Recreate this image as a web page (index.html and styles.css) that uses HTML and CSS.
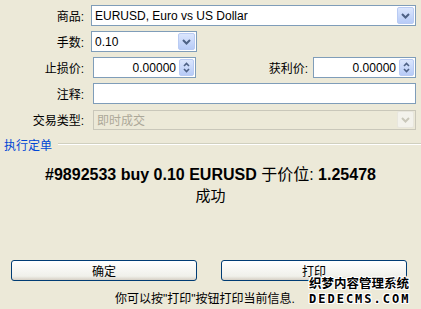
FILE: index.html
```html
<!DOCTYPE html>
<html lang="zh-CN">
<head>
    <meta charset="UTF-8">
    <title>新定单</title>
    <link rel="stylesheet" href="styles.css">
</head>
<body>
    <div class="dialog">
        <div class="form">
            <div class="row">
                <span class="lbl">商品:</span>
                <div class="combo wide">
                    <span class="val">EURUSD, Euro vs US Dollar</span>
                    <span class="drop"><svg width="9" height="6" viewBox="0 0 9 6"><path d="M1 1l3.5 3.5L8 1" fill="none" stroke="#4d6185" stroke-width="2"/></svg></span>
                </div>
            </div>
            <div class="row">
                <span class="lbl">手数:</span>
                <div class="combo small">
                    <span class="val">0.10</span>
                    <span class="drop"><svg width="9" height="6" viewBox="0 0 9 6"><path d="M1 1l3.5 3.5L8 1" fill="none" stroke="#4d6185" stroke-width="2"/></svg></span>
                </div>
            </div>
            <div class="row">
                <span class="lbl">止损价:</span>
                <div class="spin">
                    <span class="val num">0.00000</span>
                    <span class="updown"><svg width="7" height="11" viewBox="0 0 7 11"><path d="M1 4l2.5-2.5L6 4M1 7l2.5 2.5L6 7" fill="none" stroke="#4d6185" stroke-width="1.6"/></svg></span>
                </div>
                <span class="lbl right">获利价:</span>
                <div class="spin">
                    <span class="val num">0.00000</span>
                    <span class="updown"><svg width="7" height="11" viewBox="0 0 7 11"><path d="M1 4l2.5-2.5L6 4M1 7l2.5 2.5L6 7" fill="none" stroke="#4d6185" stroke-width="1.6"/></svg></span>
                </div>
            </div>
            <div class="row">
                <span class="lbl">注释:</span>
                <div class="edit"></div>
            </div>
            <div class="row">
                <span class="lbl">交易类型:</span>
                <div class="combo disabled">
                    <span class="val">即时成交</span>
                    <span class="drop"><svg width="9" height="6" viewBox="0 0 9 6"><path d="M1 1l3.5 3.5L8 1" fill="none" stroke="#c9c7ba" stroke-width="2"/></svg></span>
                </div>
            </div>
        </div>

        <div class="section">
            <span class="title">执行定单</span>
            <span class="rule"></span>
        </div>

        <div class="result">
            <p class="main">#9892533 buy 0.10 EURUSD <span class="cn">于价位:</span> 1.25478</p>
            <p class="status">成功</p>
        </div>

        <div class="buttons">
            <button class="btn">确定</button>
            <button class="btn">打印</button>
        </div>

        <p class="hint">你可以按"打印"按钮打印当前信息.</p>

        <div class="watermark">
            <span class="wm-cn">织梦内容管理系统</span>
            <span class="wm-en">DEDECMS.COM</span>
        </div>
    </div>
</body>
</html>
```

FILE: styles.css
```css
body {
    margin: 0;
    background-color: #ece9d8;
    font-family: "Liberation Sans", "Noto Sans CJK SC", sans-serif;
    font-size: 12px;
    color: #000;
    overflow: hidden;
}

.dialog {
    position: relative;
    width: 421px;
    height: 309px;
}

.form {
    display: flex;
    flex-direction: column;
    gap: 5px;
    padding: 5px 5px 0 0;
}

.row {
    display: flex;
    align-items: center;
    height: 21px;
}

.lbl {
    width: 84px;
    margin-right: 7px;
    text-align: right;
    white-space: nowrap;
}

.lbl.right {
    width: auto;
    margin-left: auto;
    margin-right: 5px;
}

.combo, .spin, .edit {
    box-sizing: border-box;
    height: 21px;
    border: 1px solid #7f9db9;
    background-color: #fff;
    display: flex;
    align-items: center;
}

.combo.wide {
    flex: 1;
}

.combo.small {
    width: 106px;
}

.edit {
    flex: 1;
    margin-left: 2px;
}

.combo.disabled {
    flex: 1;
    margin-left: 2px;
    height: 20px;
    border-color: #c9c7ba;
    background-color: #ece9d8;
    color: #aca899;
}

.val {
    flex: 1;
    padding-left: 3px;
    white-space: nowrap;
    overflow: hidden;
}

.val.num {
    text-align: right;
    padding-right: 3px;
}

.drop, .updown {
    box-sizing: border-box;
    width: 17px;
    height: 17px;
    margin-right: 1px;
    border: 1px solid #b9cbf3;
    border-radius: 2px;
    background: linear-gradient(#dbe6fd, #b7cbf7);
    display: flex;
    align-items: center;
    justify-content: center;
}

.disabled .drop {
    border-color: #e8e6dd;
    background: #f3f2ec;
}

.spin {
    width: 103px;
    margin-left: 2px;
}

.spin + .lbl.right + .spin {
    margin-left: 0;
}

.updown {
    width: 15px;
}

.section {
    display: flex;
    align-items: center;
    margin-top: 4px;
    padding-left: 4px;
    height: 20px;
}

.title {
    color: #0046d5;
    white-space: nowrap;
}

.rule {
    flex: 1;
    margin-left: 6px;
    border-top: 1px solid #d0d0bf;
    border-bottom: 1px solid #fff;
}

.result {
    margin-top: 10px;
    text-align: center;
}

.result p {
    margin: 0;
}

.main {
    font-size: 16px;
    font-weight: bold;
    line-height: 22px;
}

.main .cn {
    font-weight: normal;
}

.status {
    font-size: 15px;
    line-height: 20px;
}

.buttons {
    display: flex;
    gap: 24px;
    padding-left: 11px;
    margin-top: 54px;
}

.btn {
    box-sizing: border-box;
    width: 186px;
    height: 21px;
    padding: 0;
    font-family: inherit;
    font-size: 12px;
    border: 1px solid #003c74;
    border-radius: 3px;
    background: linear-gradient(#ffffff, #f0f0ea 80%, #d6d0c5);
    color: #000;
}

.hint {
    margin: 8px 0 0 115px;
    white-space: nowrap;
}

.watermark {
    position: absolute;
    left: 309px;
    top: 277px;
    display: flex;
    flex-direction: column;
    font-weight: bold;
    color: #000;
    text-shadow: 1px 0 #fff, -1px 0 #fff, 0 1px #fff, 0 -1px #fff, 1px 1px #fff, -1px -1px #fff, 1px -1px #fff, -1px 1px #fff;
}

.wm-cn {
    font-size: 12.5px;
    line-height: 15px;
}

.wm-en {
    font-family: "DejaVu Sans Mono", monospace;
    font-size: 12px;
    line-height: 14px;
    letter-spacing: 2px;
}
```
